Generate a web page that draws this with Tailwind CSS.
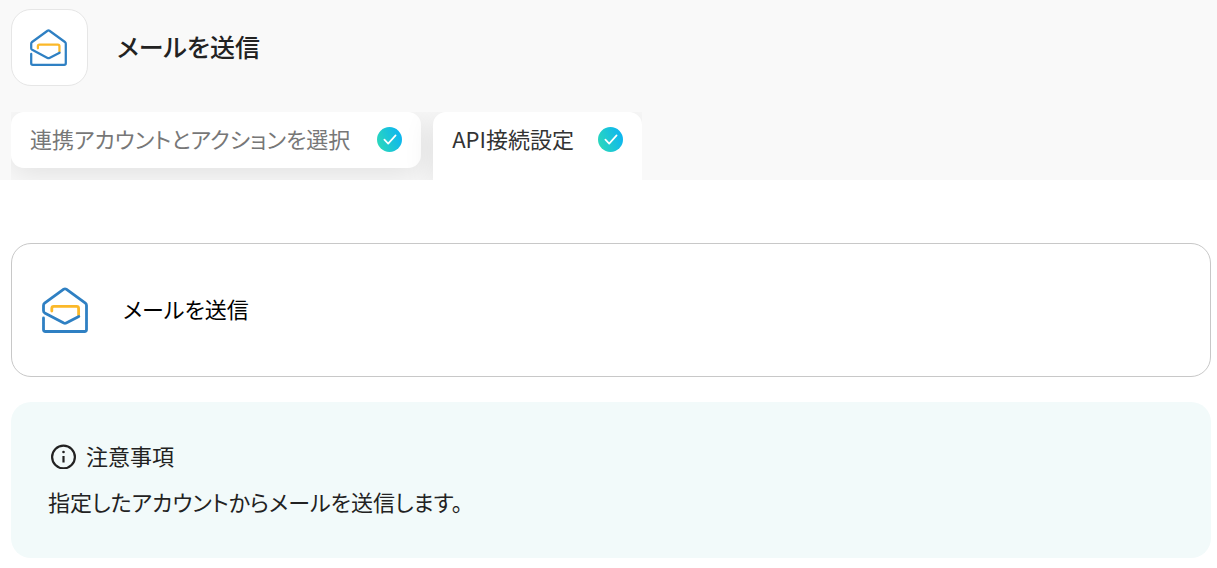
<!DOCTYPE html>
<html lang="ja">
<head>
  <meta charset="UTF-8" />
  <meta name="viewport" content="width=device-width, initial-scale=1.0"/>
  <title>メールを送信</title>
  <script src="https://cdn.jsdelivr.net/npm/@tailwindcss/browser@4"></script>
</head>
<body class="bg-white text-[22px] leading-8 text-[#222] font-['Noto_Sans_CJK_JP','Noto_Sans',sans-serif] [font-feature-settings:'palt']">
  <!-- Shared icons -->
  <svg class="absolute size-0" aria-hidden="true">
    <defs>
      <linearGradient id="checkFill" x1="0" y1="0.7" x2="1" y2="0.3">
        <stop offset="0" stop-color="#2bd8bb"/>
        <stop offset="1" stop-color="#0cb4f2"/>
      </linearGradient>
    </defs>
    <symbol id="mail" viewBox="0 0 46 46" fill="none" stroke-width="2.8" stroke-linecap="round" stroke-linejoin="round">
      <path stroke="#fbb829" d="M9.8 24V21.4Q9.8 19.4 11.8 19.4H34.6Q36.6 19.4 36.6 21.4V28"/>
      <path stroke="#2f80c3" d="M1.5 31V42.5Q1.5 44.5 3.5 44.5H42.5Q44.5 44.5 44.5 42.5V18.4Q44.5 17 43.4 16.2L24.2 2.2Q23 1.4 21.8 2.2L2.6 16.2Q1.5 17 1.5 18.4V23.8Q1.5 25.2 2.7 25.9L21.8 36Q23 36.6 24.2 36L36.8 29.4"/>
    </symbol>
    <symbol id="check" viewBox="0 0 25 25" fill="none">
      <circle cx="12.5" cy="12.5" r="12.5" fill="url(#checkFill)"/>
      <path d="M7.4 12.6L11.2 16.6L18.6 8.4" stroke="#fff" stroke-width="1.7" stroke-linecap="round" stroke-linejoin="round"/>
    </symbol>
  </svg>

  <!-- Header -->
  <header class="bg-[#f9f9f9] pl-[11px] pt-[9px]">
    <div class="flex items-center gap-[29px]">
      <div class="flex size-[77px] items-center rounded-[20px] border border-[#e6e6e6] bg-white pl-[18px]">
        <svg class="size-[37px]" aria-hidden="true"><use href="#mail"/></svg>
      </div>
      <h1 class="pb-1 text-[25px] font-medium">メールを送信</h1>
    </div>

    <!-- Tabs -->
    <div class="mt-[26px] flex w-fit items-start gap-3 overflow-hidden" role="tablist">
      <button type="button" role="tab" aria-selected="false" class="flex h-14 items-center gap-[27px] rounded-[13px] bg-white px-[19px] pb-px text-[#777] shadow-[0_6px_30px_rgba(0,0,0,0.1)]">
        <span class="pb-1">連携アカウントとアクションを選択</span>
        <svg class="size-[25px]" aria-hidden="true"><use href="#check"/></svg>
      </button>
      <button type="button" role="tab" aria-selected="true" class="flex h-[68px] items-center gap-6 rounded-t-[13px] bg-white px-[19px] pb-[13px] text-[#333] shadow-[0_6px_30px_rgba(0,0,0,0.1)]">
        <span class="pb-1">API接続設定</span>
        <svg class="size-[25px]" aria-hidden="true"><use href="#check"/></svg>
      </button>
    </div>
  </header>

  <!-- Content -->
  <main class="pt-[63px] pr-[6px] pb-[10px] pl-[11px]">
    <section class="flex items-center gap-[35px] rounded-[20px] border border-[#c8c8c8] px-[30px] py-[43px] text-black">
      <svg class="size-[46px]" aria-hidden="true"><use href="#mail"/></svg>
      <p class="pb-1">メールを送信</p>
    </section>

    <section class="mt-[25px] rounded-[20px] bg-[#f2fafa] px-[37px] py-[37px]">
      <h2 class="flex items-center gap-[10px]">
        <svg class="size-7" viewBox="0 0 28 28" fill="none" stroke="#222" aria-hidden="true">
          <circle cx="15.5" cy="16" r="11.4" stroke-width="2.2"/>
          <path d="M15.5 15V21.5" stroke-width="2.2"/>
          <circle cx="15.5" cy="11" r="1.3" fill="#222" stroke="none"/>
        </svg>
        注意事項
      </h2>
      <p class="mt-[14px] pb-1">指定したアカウントからメールを送信します。</p>
    </section>
  </main>
</body>
</html>
